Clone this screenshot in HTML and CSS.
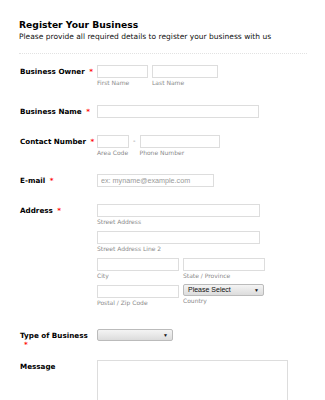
FILE: index.html
```html
<!DOCTYPE html>
<html lang="en">
<head>
    <meta charset="UTF-8">
    <meta name="viewport" content="width=device-width, initial-scale=1.0">
    <title>Register Your Business</title>
    <link rel="stylesheet" href="styles.css">
</head>
<body>
    <div class="form">
        <div class="header">
            <h1>Register Your Business</h1>
            <p>Please provide all required details to register your business with us</p>
        </div>

        <div class="row row-owner">
            <div class="label">Business Owner <span class="req">*</span></div>
            <div class="fields">
                <div class="line">
                    <div class="sub"><input class="input w-first"><span class="hint">First Name</span></div>
                    <div class="sub"><input class="input w-last"><span class="hint">Last Name</span></div>
                </div>
            </div>
        </div>

        <div class="row row-name">
            <div class="label">Business Name <span class="req">*</span></div>
            <div class="fields">
                <input class="input w-name">
            </div>
        </div>

        <div class="row row-contact">
            <div class="label">Contact Number <span class="req">*</span></div>
            <div class="fields">
                <div class="line">
                    <div class="sub"><input class="input w-area"><span class="hint">Area Code</span></div>
                    <span class="dash">-</span>
                    <div class="sub"><input class="input w-phone"><span class="hint">Phone Number</span></div>
                </div>
            </div>
        </div>

        <div class="row row-email">
            <div class="label">E-mail <span class="req">*</span></div>
            <div class="fields">
                <input class="input w-email" placeholder="ex: myname@example.com">
            </div>
        </div>

        <div class="row row-address">
            <div class="label">Address <span class="req">*</span></div>
            <div class="fields">
                <div class="sub addr"><input class="input w-street"><span class="hint">Street Address</span></div>
                <div class="sub addr"><input class="input w-street"><span class="hint">Street Address Line 2</span></div>
                <div class="line addr">
                    <div class="sub"><input class="input w-half"><span class="hint">City</span></div>
                    <div class="sub"><input class="input w-half"><span class="hint">State / Province</span></div>
                </div>
                <div class="line">
                    <div class="sub"><input class="input w-half"><span class="hint">Postal / Zip Code</span></div>
                    <div class="sub country">
                        <div class="select w-country">Please Select<span class="arrow">&#9660;</span></div>
                        <span class="hint">Country</span>
                    </div>
                </div>
            </div>
        </div>

        <div class="row row-type">
            <div class="label label-type">Type of Business <span class="req">*</span></div>
            <div class="fields">
                <div class="select w-type"><span class="arrow">&#9660;</span></div>
            </div>
        </div>

        <div class="row row-message">
            <div class="label">Message</div>
            <div class="fields">
                <div class="textarea"></div>
            </div>
        </div>
    </div>
</body>
</html>
```

FILE: styles.css
```css
body {
    margin: 0;
    background: #fff;
    font-family: "DejaVu Sans", Verdana, sans-serif;
    color: #000;
}
.form {
    padding: 0 18px 0 19px;
}
.header {
    padding-top: 18px;
    padding-bottom: 10px;
    border-bottom: 1px dotted #e2e2e2;
    margin-bottom: 11px;
}
h1 {
    margin: 0;
    font-size: 9.2px;
    line-height: 13px;
    font-weight: bold;
}
.header p {
    margin: 0;
    font-size: 7.5px;
    line-height: 12px;
    color: #111;
}
.row {
    display: flex;
    align-items: flex-start;
}
.label {
    width: 77px;
    flex-shrink: 0;
    padding-left: 1px;
    font-size: 7.2px;
    font-weight: bold;
    line-height: 13px;
}
.label-type {
    width: 70px;
    margin-right: 7px;
    line-height: 9px;
    padding-top: 2px;
}
.label-type .req {
    margin-left: 4px;
}
.req {
    color: #f00;
    margin-left: 2px;
}
.fields {
    display: flex;
    flex-direction: column;
}
.line {
    display: flex;
    align-items: flex-start;
}
.sub {
    display: flex;
    flex-direction: column;
    margin-right: 4px;
}
.hint {
    font-size: 6px;
    line-height: 10px;
    color: #8a8a8a;
}
.input {
    box-sizing: border-box;
    height: 13px;
    margin: 0;
    padding: 0 3px;
    border: 1px solid #ddd;
    background: #fff;
    font-family: "Liberation Sans", Arial, sans-serif;
    font-size: 7.2px;
    outline: none;
}
.input::placeholder {
    color: #999;
}
.dash {
    font-size: 7px;
    color: #888;
    line-height: 13px;
    margin-right: 4px;
}
.w-first { width: 51px; }
.w-last { width: 66px; }
.w-name { width: 162px; }
.w-area { width: 32px; }
.w-phone { width: 80px; }
.w-email { width: 117px; }
.w-street { width: 163px; }
.w-half { width: 82px; }
.w-country { width: 81px; }
.w-type { width: 76px; }
.addr {
    margin-bottom: 4px;
}
.row-owner { margin-bottom: 17px; }
.row-name { margin-bottom: 17px; }
.row-contact { margin-bottom: 16px; }
.row-email { margin-bottom: 17px; }
.row-address { margin-bottom: 21px; }
.row-type { margin-bottom: 11px; }
.select {
    box-sizing: border-box;
    position: relative;
    height: 12px;
    padding-left: 4px;
    border: 1px solid #bbb;
    border-radius: 2px;
    background: linear-gradient(#f4f4f4, #dcdcdc);
    font-family: "Liberation Sans", Arial, sans-serif;
    font-size: 7px;
    line-height: 10px;
    color: #111;
}
.arrow {
    position: absolute;
    right: 4px;
    top: 0;
    font-size: 5px;
    line-height: 10px;
    color: #111;
}
.country {
    margin-top: -1px;
}
.textarea {
    box-sizing: border-box;
    width: 191px;
    height: 60px;
    border: 1px solid #ddd;
}
```
